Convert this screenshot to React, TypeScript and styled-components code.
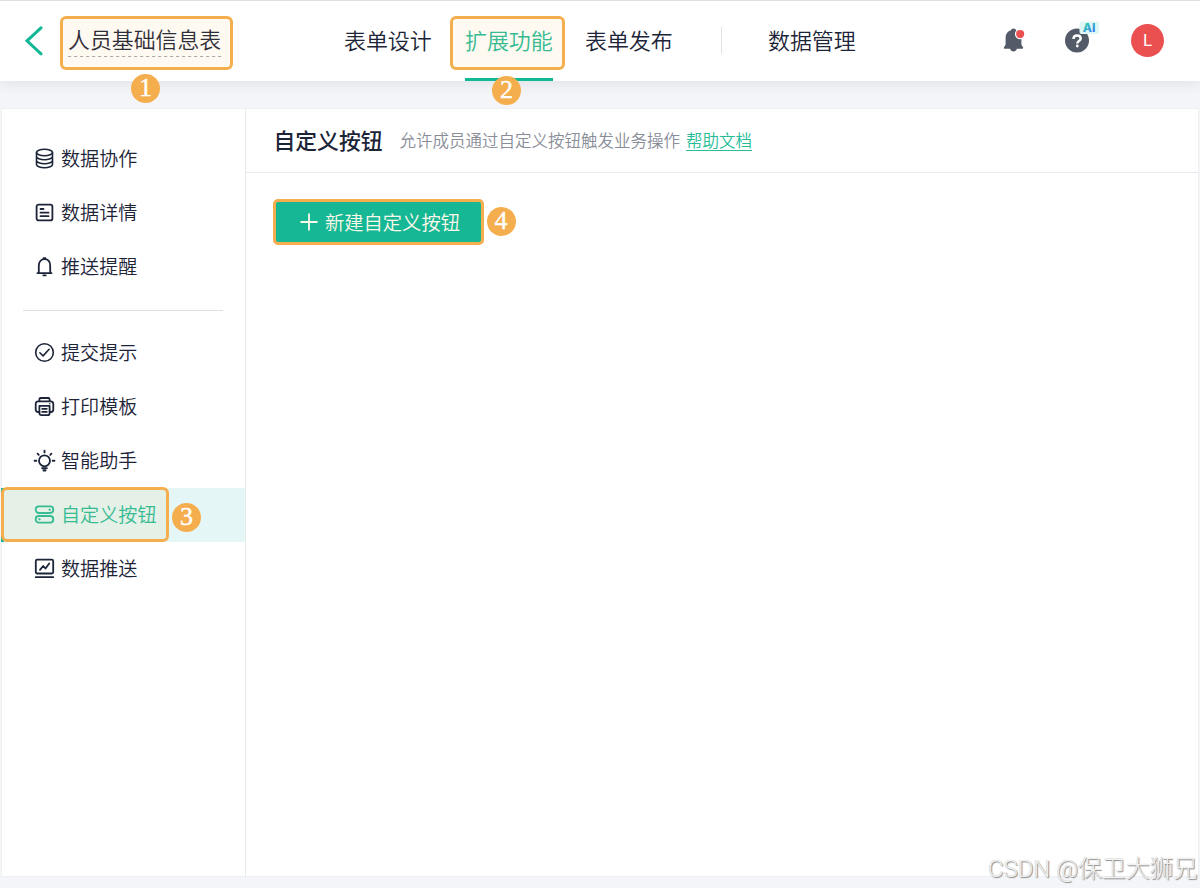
import React from 'react';
import styled, { createGlobalStyle, css } from 'styled-components';

const GlobalStyle = createGlobalStyle`
  * { box-sizing: border-box; }
  body {
    margin: 0;
    background: #f4f5f8;
    color: #1c2438;
    font-family: "Noto Sans CJK SC", "Noto Sans", sans-serif;
    font-weight: 350;
    overflow: hidden;
  }
`;

const Page = styled.div`
  position: relative;
  width: 1200px;
  height: 888px;
  display: flex;
  flex-direction: column;
  overflow: hidden;
`;

const Header = styled.header`
  position: relative;
  z-index: 1;
  height: 81px;
  flex: none;
  display: flex;
  align-items: stretch;
  background: #fff;
  border-top: 1px solid #dfe0e1;
  box-shadow: 0 3px 12px rgba(30, 40, 60, 0.09);
`;

const Back = styled.a`
  width: 60px;
  padding: 25px 0 0 24px;
`;

const FormName = styled.div`
  position: relative;
  width: 284px;
  padding: 22px 0 0 8px;
`;

const NameText = styled.div`
  width: 154px;
  height: 33px;
  font-size: 21.9px;
  line-height: 32px;
  white-space: nowrap;
`;

const NameDashes = styled.svg`
  display: block;
`;

const Nav = styled.nav`
  display: flex;
  align-items: stretch;
`;

const Tab = styled.a<{ $active?: boolean; $gap?: number }>`
  position: relative;
  width: 88px;
  margin-right: ${(p) => p.$gap ?? 0}px;
  font-size: 22px;
  line-height: 77px;
  letter-spacing: -0.1px;
  white-space: nowrap;
  ${(p) =>
    p.$active &&
    css`
      color: #26bc98;
      border-bottom: 3px solid #12b795;
    `}
`;

const TabDivider = styled.div`
  width: 1px;
  height: 27px;
  margin: 26px 46px 0 0;
  background: #dfe1e5;
`;

const Tools = styled.div`
  display: flex;
  flex: 1;
  justify-content: flex-end;
  align-items: center;
  padding: 0 36px 2px 0;
`;

const Bell = styled.div`
  width: 26px;
  height: 30px;
  margin-right: 35px;
`;

const Help = styled.div`
  width: 38px;
  height: 40px;
  margin-right: 31px;
`;

const Avatar = styled.div`
  width: 33px;
  height: 33px;
  border-radius: 50%;
  background: #eb5050;
  color: #fff;
  font: 17px/33px Roboto, sans-serif;
  text-align: center;
`;

const Panel = styled.main`
  display: flex;
  height: 769px;
  margin: 27px 1px 0 1px;
  background: #fff;
  border-top: 1px solid #e8eaed;
  border-bottom: 1px solid #e8eaed;
  outline: 1px solid #eff0f2;
  outline-offset: -1px;
`;

const Sidebar = styled.aside`
  width: 245px;
  flex: none;
  padding-top: 22px;
  border-right: 1px solid #e8e9ec;
`;

const MenuItem = styled.a<{ $active?: boolean }>`
  position: relative;
  display: flex;
  align-items: center;
  height: 54.1px;
  padding-left: 32px;
  gap: 5px;
  font-size: 19.1px;
  line-height: 28px;
  white-space: nowrap;
  ${(p) =>
    p.$active &&
    css`
      background: #e4f6f5;
      color: #26bc98;
      box-shadow: inset 3px 0 0 #12b795;
    `}
`;

const MenuIcon = styled.svg`
  width: 23px;
  height: 23px;
  flex: none;
  fill: none;
  stroke: currentColor;
  stroke-width: 1.6;
  stroke-linecap: round;
  stroke-linejoin: round;
`;

const MenuLabel = styled.span`
  margin-top: -1px;
`;

const MenuRule = styled.hr`
  width: 200px;
  height: 1px;
  margin: 17px 0 14px 22px;
  border: 0;
  background: #dfe0e3;
`;

const Content = styled.section`
  flex: 1;
`;

const ContentHead = styled.div`
  display: flex;
  align-items: center;
  height: 64px;
  padding: 0 0 2px 27.5px;
  border-bottom: 1px solid #e8eaed;
`;

const Heading = styled.h1`
  margin: 0;
  width: 126px;
  font-size: 21.8px;
  line-height: 32px;
  font-weight: 500;
  white-space: nowrap;
`;

const Hint = styled.span`
  width: 286.5px;
  font-size: 16.5px;
  line-height: 24px;
  color: #898d97;
  white-space: nowrap;
`;

const DocLink = styled.a`
  font-size: 16.5px;
  line-height: 24px;
  color: #26bc98;
  text-decoration: underline;
  text-underline-offset: 3px;
  text-decoration-thickness: 1px;
`;

const Action = styled.div`
  position: relative;
  display: flex;
  width: 211px;
  margin: 26px 0 0 27px;
`;

const CreateButton = styled.button`
  display: flex;
  align-items: center;
  gap: 7px;
  width: 211px;
  height: 46px;
  padding: 0 0 1px 24px;
  border: 3px solid #f5ae4d;
  border-radius: 5px;
  background: #16b795;
  color: #fdf8e9;
  font-family: "Noto Sans CJK SC", sans-serif;
  font-size: 19.3px;
  font-weight: 350;
  line-height: 28px;
  white-space: nowrap;
`;

const Mark = styled.div<{ $x: number; $y: number; $w: number; $h: number }>`
  position: absolute;
  left: ${(p) => p.$x}px;
  top: ${(p) => p.$y}px;
  width: ${(p) => p.$w}px;
  height: ${(p) => p.$h}px;
  border: 3px solid #f5ae4d;
  border-radius: 6px;
  background: rgba(245, 174, 77, 0.08);
`;

const Step = styled.div<{ $x: number; $y: number }>`
  position: absolute;
  z-index: 2;
  left: ${(p) => p.$x}px;
  top: ${(p) => p.$y}px;
  width: 29px;
  height: 29px;
  border-radius: 50%;
  background: #f5ae4d;
  color: #fff;
  font: 26px/28px "Liberation Serif", serif;
  -webkit-text-stroke: 0.4px #fff;
  text-align: center;
`;

const Watermark = styled.div`
  position: absolute;
  left: 988px;
  top: 852px;
  color: #f1f1f1;
  font: 300 23.9px/34px Roboto, "Noto Sans CJK SC", sans-serif;
  text-shadow: 1px 1px 1px #8a8a8a, 0 0 1px #bbb;
  white-space: nowrap;
`;

const icons = {
  database: (
    <>
      <ellipse cx="11.5" cy="5.5" rx="8" ry="3.2" />
      <path d="M3.5 5.5v12c0 1.8 3.6 3.2 8 3.2s8-1.4 8-3.2v-12M3.5 9.5c0 1.8 3.6 3.2 8 3.2s8-1.4 8-3.2M3.5 13.5c0 1.8 3.6 3.2 8 3.2s8-1.4 8-3.2" />
    </>
  ),
  detail: (
    <>
      <rect x="3.6" y="3.6" width="15.8" height="15.8" rx="2" strokeWidth="1.8" />
      <path d="M7.5 8h3M7.5 11.7h8M7.5 15.2h8" strokeWidth="1.8" />
    </>
  ),
  bell: (
    <>
      <path d="M4.5 18.2h14M5.8 18v-7.2c0-4 2.2-6.6 5.7-6.6s5.7 2.6 5.7 6.600V18" strokeWidth="1.8" />
      <path d="M10.5 3.2h2M10.2 20.3h2.6" strokeWidth="1.7" />
    </>
  ),
  check: (
    <>
      <circle cx="11.5" cy="11.5" r="8.8" />
      <path d="m6.9 11.8 3.2 3.1 6-6.6" />
    </>
  ),
  printer: (
    <>
      <path d="M6.4 5.600V4.200c0-.8.5-1.200 1.200-1.200h7.800c.7 0 1.200.4 1.200 1.200v1.400M6.400 17H5.200c-1.600 0-2.500-.9-2.500-2.500V9c0-1.600.9-2.600 2.500-2.600h12.600c1.600 0 2.500 1 2.500 2.600v5.500c0 1.600-.9 2.500-2.500 2.500h-1.200" strokeWidth="1.8" />
      <path d="M6.400 10.800h10.200v7.400c0 1.200-.8 2-2 2H8.400c-1.200 0-2-.8-2-2zM9.200 13.800h4.600M9.200 16.900h4.600" strokeWidth="1.8" />
      <path d="M16.800 8.700v.1" />
    </>
  ),
  bulb: (
    <>
      <circle cx="11.5" cy="11.8" r="5.5" strokeWidth="1.8" />
      <path d="M9.2 19.200h4.600M10.500 21.500h2M11.500 1.700v1.700M4.600 4.700l1.100 1.100M18.400 4.700l-1.100 1.100M1.600 11.700h1.700M19.700 11.700h1.700" strokeWidth="1.9" />
    </>
  ),
  buttons: (
    <>
      <rect x="2.7" y="3.4" width="17.6" height="6.6" rx="3.2" strokeWidth="1.8" />
      <rect x="2.7" y="13" width="17.6" height="6.6" rx="3.2" strokeWidth="1.8" />
      <circle cx="16.6" cy="6.7" r=".8" fill="currentColor" strokeWidth=".6" />
      <circle cx="6.4" cy="16.3" r=".8" fill="currentColor" strokeWidth=".6" />
    </>
  ),
  chart: (
    <>
      <rect x="2.8" y="2.7" width="17.4" height="13.800" rx="1.5" strokeWidth="1.8" />
      <path d="M2.8 20.2h17.4M7 12.900l3.200-3.900 2.300 2.500 3.700-5" strokeWidth="1.8" />
    </>
  ),
};

type IconName = keyof typeof icons;

const topMenu: { icon: IconName; label: string }[] = [
  { icon: 'database', label: '数据协作' },
  { icon: 'detail', label: '数据详情' },
  { icon: 'bell', label: '推送提醒' },
];

const bottomMenu: { icon: IconName; label: string; active?: boolean }[] = [
  { icon: 'check', label: '提交提示' },
  { icon: 'printer', label: '打印模板' },
  { icon: 'bulb', label: '智能助手' },
  { icon: 'buttons', label: '自定义按钮', active: true },
  { icon: 'chart', label: '数据推送' },
];

function Entry({ icon, label, active }: { icon: IconName; label: string; active?: boolean }) {
  return (
    <MenuItem $active={active}>
      {active && <Mark $x={0} $y={-1} $w={168} $h={55} />}
      <MenuIcon viewBox="0 0 23 23">{icons[icon]}</MenuIcon>
      <MenuLabel>{label}</MenuLabel>
      {active && <Step $x={171} $y={15}>3</Step>}
    </MenuItem>
  );
}

export default function App() {
  return (
    <Page>
      <GlobalStyle />
      <Header>
        <Back>
          <svg width="20" height="30" viewBox="0 0 20 30" fill="none" stroke="#12b795" strokeWidth="3" strokeLinecap="round">
            <path d="M17 1.8 3 14.8l14 13" />
          </svg>
        </Back>
        <FormName>
          <Mark $x={-0.5} $y={15} $w={173} $h={54} />
          <NameText>人员基础信息表</NameText>
          <NameDashes width="155" height="1" viewBox="0 0 155 1">
            <path d="M0 .5h155" stroke="#aaa" strokeDasharray="3.2 2.8" />
          </NameDashes>
          <Step $x={71} $y={73}>1</Step>
        </FormName>
        <Nav>
          <Tab $gap={33}>表单设计</Tab>
          <Tab $active $gap={32}>
            <Mark $x={-15} $y={15} $w={115} $h={54} />
            扩展功能
            <Step $x={27} $y={75}>2</Step>
          </Tab>
          <Tab $gap={48}>表单发布</Tab>
          <TabDivider />
          <Tab>数据管理</Tab>
        </Nav>
        <Tools>
          <Bell>
            <svg width="26" height="30" viewBox="0 0 26 30">
              <path
                d="M12.500 3.400c1.300 0 2.200.7 2.600 1.800 3.300 1 5.300 3.700 5.300 7.200v7.400l1.600 2.400c.4.8 0 1.600-.9 1.600h-5.200c-.5 1.800-1.800 2.800-3.400 2.800s-2.900-1-3.400-2.800H3.900c-.9 0-1.300-.8-.9-1.600l1.600-2.400v-7.400c0-3.500 2-6.200 5.300-7.200.4-1.100 1.300-1.800 2.600-1.800z"
                fill="#535b69"
              />
              <circle cx="19.2" cy="9" r="4.7" fill="#eb5050" stroke="#fff" strokeWidth="1.2" />
            </svg>
          </Bell>
          <Help>
            <svg width="38" height="40" viewBox="0 0 38 40">
              <defs>
                <linearGradient id="ai" x1="0" y1="0" x2=".8" y2="1">
                  <stop offset=".2" stopColor="#2fd4b3" />
                  <stop offset=".9" stopColor="#3d7df0" />
                </linearGradient>
              </defs>
              <circle cx="15" cy="20.5" r="12" fill="#535b69" />
              <path d="M11.5 18.900c0-2 1.500-3.400 3.600-3.400s3.600 1.300 3.600 3.100c0 2.500-3.400 2.500-3.400 4.900" fill="none" stroke="#fff" strokeWidth="2.5" />
              <circle cx="15.3" cy="26" r="1.4" fill="#fff" />
              <rect x="17.5" y="1.5" width="19.5" height="12.5" rx="2" fill="#dcf7f5" />
              <text x="20.8" y="12" fontFamily="Inter, sans-serif" fontSize="12" fontWeight="800" fill="url(#ai)">
                AI
              </text>
            </svg>
          </Help>
          <Avatar>L</Avatar>
        </Tools>
      </Header>
      <Panel>
        <Sidebar>
          {topMenu.map((m) => (
            <Entry key={m.label} {...m} />
          ))}
          <MenuRule />
          {bottomMenu.map((m) => (
            <Entry key={m.label} {...m} />
          ))}
        </Sidebar>
        <Content>
          <ContentHead>
            <Heading>自定义按钮</Heading>
            <Hint>允许成员通过自定义按钮触发业务操作</Hint>
            <DocLink>帮助文档</DocLink>
          </ContentHead>
          <Action>
            <CreateButton>
              <svg width="18" height="18" viewBox="0 0 18 18" stroke="currentColor" strokeWidth="1.8">
                <path d="M9 .5v17M.5 9h17" />
              </svg>
              新建自定义按钮
            </CreateButton>
            <Step $x={213.5} $y={8}>4</Step>
          </Action>
        </Content>
      </Panel>
      <Watermark>CSDN @保卫大狮兄</Watermark>
    </Page>
  );
}
